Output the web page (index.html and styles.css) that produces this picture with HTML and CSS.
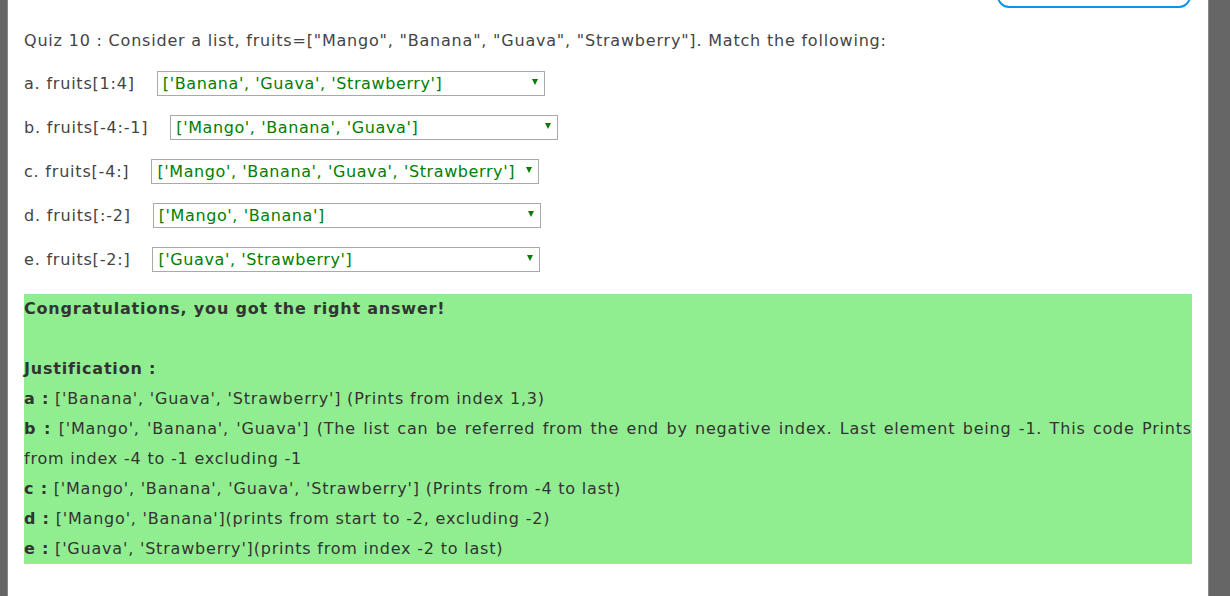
FILE: index.html
```html
<!DOCTYPE html>
<html>
<head>
<meta charset="utf-8">
<link rel="stylesheet" href="styles.css">
</head>
<body>
<div class="frame">
  <div class="bar-left"></div>
  <div class="main">
    <div class="top">
      <div class="duration">Duration: 5 mins</div>
    </div>
    <p class="question">Quiz 10 : Consider a list, fruits=["Mango", "Banana", "Guava", "Strawberry"]. Match the following:</p>
    <div class="row"><span class="label">a. fruits[1:4]</span><div class="select"><span class="val">['Banana', 'Guava', 'Strawberry']</span><span class="arrow"></span></div></div>
    <div class="row"><span class="label">b. fruits[-4:-1]</span><div class="select"><span class="val">['Mango', 'Banana', 'Guava']</span><span class="arrow"></span></div></div>
    <div class="row"><span class="label">c. fruits[-4:]</span><div class="select"><span class="val">['Mango', 'Banana', 'Guava', 'Strawberry']</span><span class="arrow"></span></div></div>
    <div class="row"><span class="label">d. fruits[:-2]</span><div class="select"><span class="val">['Mango', 'Banana']</span><span class="arrow"></span></div></div>
    <div class="row"><span class="label">e. fruits[-2:]</span><div class="select"><span class="val">['Guava', 'Strawberry']</span><span class="arrow"></span></div></div>
    <div class="result">
      <p class="line"><b>Congratulations, you got the right answer!</b></p>
      <p class="line">&nbsp;</p>
      <p class="line"><b>Justification :</b></p>
      <p class="line"><b>a :</b> ['Banana', 'Guava', 'Strawberry'] (Prints from index 1,3)</p>
      <p class="line"><b>b :</b> ['Mango', 'Banana', 'Guava'] (The list can be referred from the end by negative index. Last element being -1. This code Prints from index -4 to -1 excluding -1</p>
      <p class="line"><b>c :</b> ['Mango', 'Banana', 'Guava', 'Strawberry'] (Prints from -4 to last)</p>
      <p class="line"><b>d :</b> ['Mango', 'Banana'](prints from start to -2, excluding -2)</p>
      <p class="line"><b>e :</b> ['Guava', 'Strawberry'](prints from index -2 to last)</p>
    </div>
  </div>
  <div class="bar-right"></div>
</div>
</body>
</html>
```
FILE: styles.css
```css
html, body {
  margin: 0;
  padding: 0;
  height: 100%;
  overflow: hidden;
}
body {
  font-family: "DejaVu Sans", Verdana, sans-serif;
  font-size: 16px;
  letter-spacing: 0.8px;
  color: #444;
  background: #fff;
}
.frame {
  display: flex;
  height: 596px;
}
.bar-left {
  width: 7px;
  background: #666;
  border-right: 1px solid #888;
}
.bar-right {
  width: 21px;
  background: #666;
  border-left: 1px solid #888;
}
.main {
  flex: 1;
  background: #fff;
  padding: 0 16px;
  overflow: hidden;
}
.top {
  display: flex;
  justify-content: flex-end;
  margin-top: -26px;
  height: 34px;
}
.duration {
  width: 194px;
  height: 34px;
  box-sizing: border-box;
  border: 2px solid #0a96e8;
  border-radius: 12px;
  text-align: center;
  line-height: 28px;
  color: #333;
  margin-right: 1px;
}
.question {
  margin: 19px 0 0;
  height: 34px;
  line-height: 28px;
}
.row {
  display: flex;
  align-items: center;
  height: 44px;
}
.label {
  margin-right: 22px;
}
.select {
  width: 388px;
  height: 25px;
  box-sizing: border-box;
  border: 1px solid #a9a9a9;
  display: flex;
  align-items: center;
  justify-content: space-between;
  padding: 0 6px 0 5px;
  color: #008000;
  white-space: nowrap;
  letter-spacing: 0.6px;
}
.arrow {
  flex: none;
  width: 0;
  height: 0;
  margin-left: 6px;
  border-left: 3.5px solid transparent;
  border-right: 3.5px solid transparent;
  border-top: 6px solid #008000;
  margin-bottom: 2px;
}
.result {
  margin-top: 13px;
  background: #90ee90;
  color: #333;
  text-align: justify;
}
.result .line {
  margin: 0;
  line-height: 30px;
}
.result b {
  color: #333;
}
```
